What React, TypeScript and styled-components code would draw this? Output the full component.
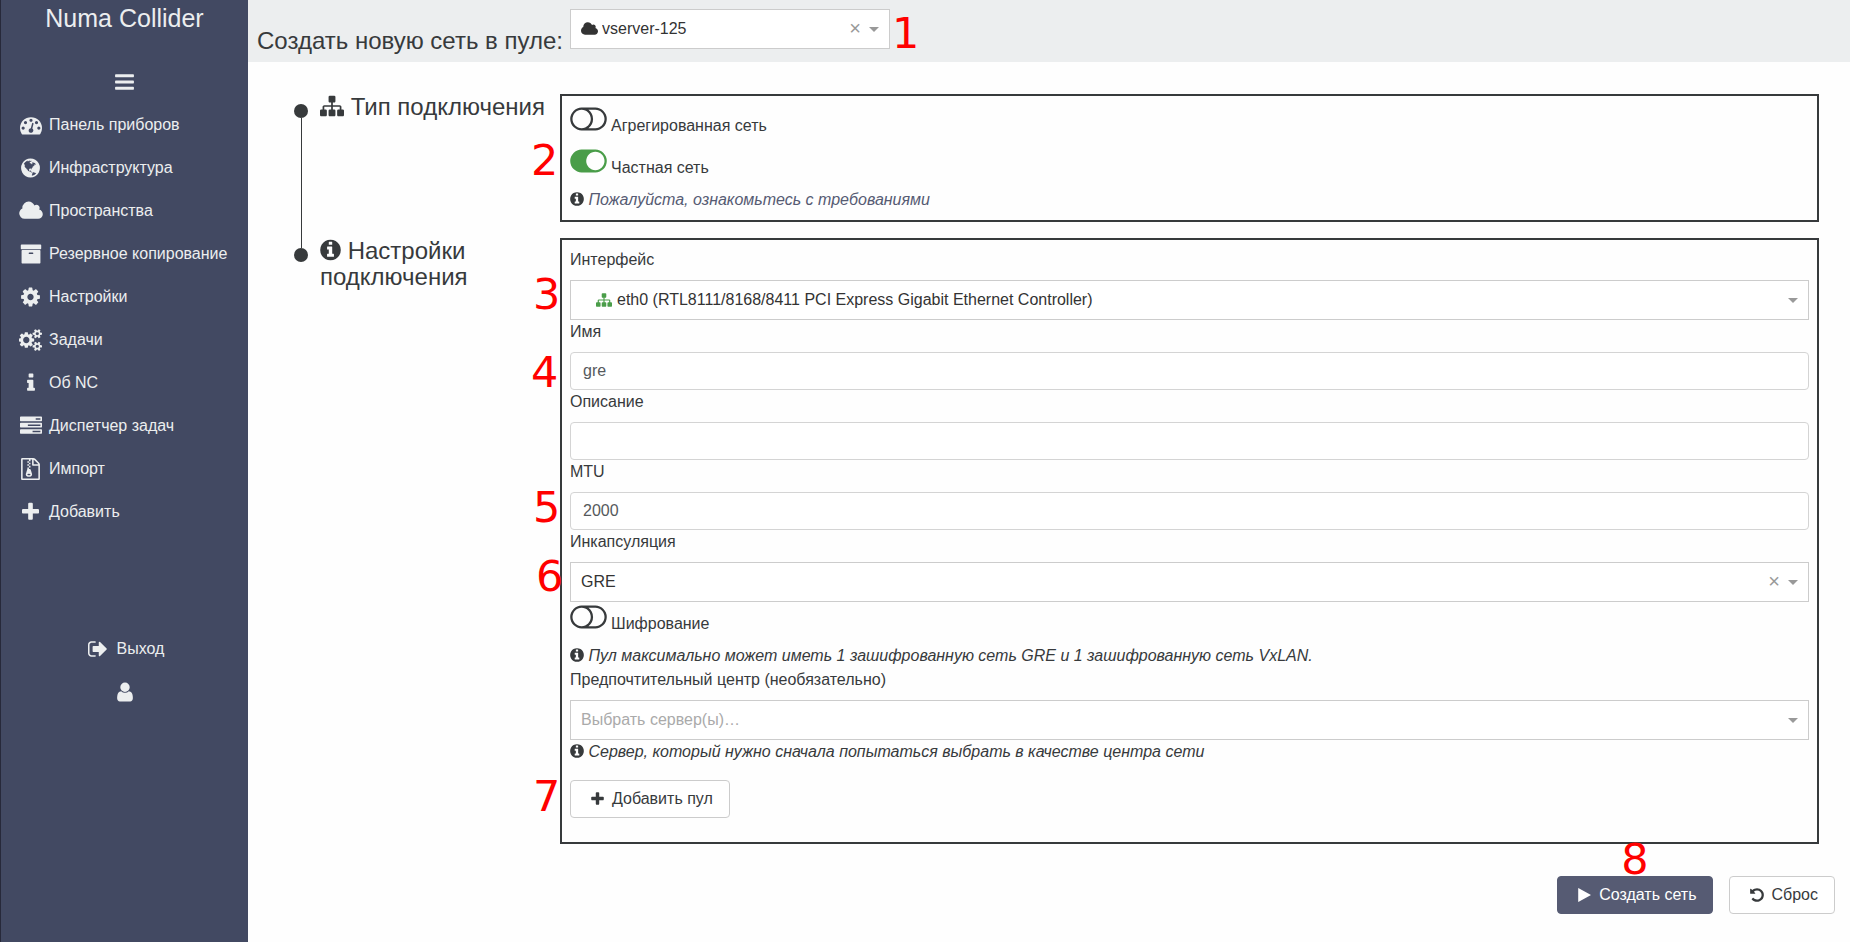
import React, { useState } from 'react';
import styled, { createGlobalStyle } from 'styled-components';

const color = {
  sidebar: '#424962',
  sidebarEdge: '#27293a',
  light: '#eceeef',
  ink: '#373a3c',
  input: '#55595c',
  border: '#cccccc',
  inputBorder: '#d4d4d4',
  muted: '#999999',
  green: '#4a9d49',
  primary: '#565b73',
  callout: '#ff0000',
};

const GlobalStyle = createGlobalStyle`
  *, *::before, *::after { box-sizing: border-box; }
  body {
    margin: 0;
    background: #fefefe;
    color: ${color.ink};
    font-family: "Liberation Sans", Arial, sans-serif;
    font-size: 16px;
    line-height: 24px;
  }
`;

/* ---------- icons: [left edge, width, path], all 1792 units high ---------- */

type Glyph = [number, number, string];

const glyphs = {
  bars: [128, 1536, 'M1664 1344v128q0 26-19 45t-45 19h-1408q-26 0-45-19t-19-45v-128q0-26 19-45t45-19h1408q26 0 45 19t19 45zm0-512v128q0 26-19 45t-45 19h-1408q-26 0-45-19t-19-45v-128q0-26 19-45t45-19h1408q26 0 45 19t19 45zm0-512v128q0 26-19 45t-45 19h-1408q-26 0-45-19t-19-45v-128q0-26 19-45t45-19h1408q26 0 45 19t19 45z'],
  dashboard: [0, 1792, 'M384 1152q0-53-37.5-90.5t-90.5-37.5-90.5 37.5-37.5 90.5 37.5 90.5 90.5 37.5 90.5-37.5 37.5-90.5zm192-448q0-53-37.5-90.5t-90.5-37.5-90.5 37.5-37.5 90.5 37.5 90.5 90.5 37.5 90.5-37.5 37.5-90.5zm428 481l101-382q6-26-7.5-48.5t-38.5-29.5-48 6.5-30 39.5l-101 382q-60 5-107 43.5t-63 98.5q-20 77 20 146t117 89 146-20 89-117q16-60-6-117t-72-91zm660-33q0-53-37.5-90.5t-90.5-37.5-90.5 37.5-37.5 90.5 37.5 90.5 90.5 37.5 90.5-37.5 37.5-90.5zm-640-640q0-53-37.5-90.5t-90.5-37.5-90.5 37.5-37.5 90.5 37.5 90.5 90.5 37.5 90.5-37.5 37.5-90.5zm448 192q0-53-37.5-90.5t-90.5-37.5-90.5 37.5-37.5 90.5 37.5 90.5 90.5 37.5 90.5-37.5 37.5-90.5zm320 448q0 261-141 483-19 29-54 29h-1402q-35 0-54-29-141-221-141-483 0-182 71-348t191-286 286-191 348-71 348 71 286 191 191 286 71 348z'],
  globe: [128, 1536, 'M896 128q209 0 385.5 103t279.5 279.5 103 385.5-103 385.5-279.5 279.5-385.5 103-385.5-103-279.5-279.5-103-385.5 103-385.5 279.5-279.5 385.5-103zm274 521q-2 1-9.5 9.5t-13.5 9.5q2 0 4.5-5t5-11 3.5-7q6-7 22-15 14-6 52-12 34-8 51 11-2-2 9.5-13t14.5-12q3-2 15-4.5t15-7.5l2-22q-12 1-17.5-7t-6.5-21q0 2-6 8 0-7-4.5-8t-11.5 1-9 1q-10-3-15-7.5t-8-16.5-4-15q-2-5-9.5-11t-9.5-10q-1-2-2.5-5.5t-3-6.5-4-5.5-5.5-2.5-7 5-7.5 10-4.5 5q-3-2-6-1.5t-4.5 1-4.5 3-5 3.5q-3 2-8.5 3t-8.5 2q15-5-1-11-10-4-16-3 9-4 7.5-12t-8.5-14h5q-1-4-8.5-8.5t-17.5-8.5-13-6q-8-5-34-9.5t-33-.5q-5 6-4.5 10.5t4 14 3.5 12.5q1 6-5.5 13t-6.5 12q0 7 14 15.5t10 21.5q-3 8-16 16t-16 12q-5 8-1.5 18.5t10.5 16.5q2 2 1.5 4t-3.5 4.5-5.5 4-6.5 3.5l-3 2q-11 5-20.5-6t-13.5-26q-7-25-16-30-23-8-29 1-5-13-41-26-25-9-58-4 6-1 0-15-7-15-19-12 3-6 4-17.5t1-13.5q3-13 12-23 1-1 7-8.5t9.5-13.5.5-6q35 4 50-11 5-5 11.5-17t10.5-17q9-6 14-5.5t14.5 5.5 14.5 5q14 1 15.5-11t-7.5-20q12 1 3-17-4-7-8-9-12-4-27 5-8 4 2 8-1-1-9.5 10.5t-16.5 17.5-16-5q-1-1-5.5-13.5t-9.5-13.5q-8 0-16 15 3-8-11-15t-24-8q19-12-8-27-7-4-20.5-5t-19.5 4q-5 7-5.5 11.5t5 8 10.5 5.5 11.5 4 8.5 3q14 10 8 14-2 1-8.5 3.5t-11.5 4.5-6 4q-3 4 0 14t-2 14q-5-5-9-17.5t-7-16.5q7 9-25 6l-10-1q-4 0-16 2t-20.5 1-13.5-8q-4-8 0-20 1-4 4-2-4-3-11-9.5t-10-8.5q-46 15-94 41 6 1 12-1 5-2 13-6.5t10-5.5q34-14 42-7l5-5q14 16 20 25-7-4-30-1-20 6-22 12 7 12 5 18-4-3-11.5-10t-14.5-11-15-5q-16 0-22 1-146 80-235 222 7 7 12 8 4 1 5 9t2.5 11 11.5-3q9 8 3 19 1-1 44 27 19 17 21 21 3 11-10 18-1-2-9-9t-9-4q-3 5 .5 18.5t10.5 12.5q-7 0-9.5 16t-2.5 35.5-1 23.5l2 1q-3 12 5.5 34.5t21.5 19.5q-13 3 20 43 6 8 8 9 3 2 12 7.5t15 10 10 10.5q4 5 10 22.5t14 23.5q-2 6 9.5 20t10.5 23q-1 0-2.5 1t-2.5 1q3 7 15.5 14t15.5 13q1 3 2 10t3 11 8 2q2-20-24-62-15-25-17-29-3-5-5.5-15.5t-4.5-14.5q2 0 6 1.5t8.5 3.5 7.5 4 2 3q-3 7 2 17.5t12 18.5 17 19 12 13q6 6 14 19.5t0 13.5q9 0 20 10t17 20q5 8 8 26t5 24q2 7 8.5 13.5t12.5 9.5l16 8 13 7q5 2 18.5 10.5t21.5 11.5q10 4 16 4t14.5-2.5 13.5-3.5q15-2 29 15t21 21q36 19 55 11-2 1 .5 7.5t8 15.5 9 14.5 5.5 8.5q5 6 18 15t18 15q6-4 7-9-3 8 7 20t18 10q14-3 14-32-31 15-49-18 0-1-2.5-5.5t-4-8.5-2.5-8.5 0-7.5 5-3q9 0 10-3.5t-2-12.5-4-13q-1-8-11-20t-12-15q-5 9-16 8t-16-9q0 1-1.5 5.5t-1.5 6.5q-13 0-15-1 1-3 2.5-17.5t3.5-22.5q1-4 5.5-12t7.5-14.5 4-12.5-4.5-9.5-17.5-2.5q-19 1-26 20-1 3-3 10.5t-5 11.5-9 7q-7 3-24 2t-24-5q-13-8-22.5-29t-9.5-37q0-10 2.5-26.5t3-25-5.5-24.5q3-2 9-9.5t10-10.5q2-1 4.5-1.5t4.5 0 4-1.5 3-6q-1-1-4-3-3-3-4-3 7 3 28.5-1.5t27.5 1.5q15 11 22-2 0-1-2.5-9.5t-.5-13.5q5 27 29 9 3 3 15.5 5t17.5 5q3 2 7 5.5t5.5 4.5 5-.5 8.5-6.5q10 14 12 24 11 40 19 44 7 3 11 2t4.5-9.5 0-14-1.5-12.5l-1-8v-18l-1-8q-15-3-18.5-12t1.5-18.5 15-18.5q1-1 8-3.5t15.5-6.5 12.5-8q21-19 15-35 7 0 11-9-1 0-5-3t-7.5-5-4.5-2q9-5 2-16 5-3 7.5-11t7.5-10q9 12 21 2 8-8 1-16 5-7 20.5-10.5t18.5-9.5q7 2 8-2t1-12 3-12q4-5 15-9t13-5l17-11q3-4 0-4 18 2 31-11 10-11-6-20 3-6-3-9.5t-15-5.5q3-1 11.5-.5t10.5-1.5q15-10-7-16-17-5-43 12zm-163 877q206-36 351-189-3-3-12.5-4.5t-12.5-3.5q-18-7-24-8 1-7-2.5-13t-8-9-12.5-8-11-7q-2-2-7-6t-7-5.5-7.5-4.5-8.5-2-10 1l-3 1q-3 1-5.5 2.5t-5.5 3-4 3 0 2.5q-21-17-36-22-5-1-11-5.5t-10.5-7-10-1.5-11.5 7q-5 5-6 15t-2 13q-7-5 0-17.5t2-18.5q-3-6-10.5-4.5t-12 4.5-11.5 8.5-9 6.5-8.5 5.5-8.5 7.5q-3 4-6 12t-5 11q-2-4-11.5-6.5t-9.5-5.5q2 10 4 35t5 38q7 31-12 48-27 25-29 40-4 22 12 26 0 7-8 20.5t-7 21.5q0 6 2 16z'],
  cloud: [64, 1920, 'M1984 1152q0 159-112.5 271.5t-271.5 112.5h-1088q-185 0-316.5-131.5t-131.5-316.5q0-132 71-241.5t187-163.5q-2-28-2-43 0-212 150-362t362-150q158 0 286.5 88t187.5 230q70-62 166-62 106 0 181 75t75 181q0 75-41 138 129 30 213 134.5t84 239.5z'],
  archive: [0, 1792, 'M1088 832q0-26-19-45t-45-19h-256q-26 0-45 19t-19 45 19 45 45 19h256q26 0 45-19t19-45zm576-192v960q0 26-19 45t-45 19h-1408q-26 0-45-19t-19-45v-960q0-26 19-45t45-19h1408q26 0 45 19t19 45zm64-448v256q0 26-19 45t-45 19h-1536q-26 0-45-19t-19-45v-256q0-26 19-45t45-19h1536q26 0 45 19t19 45z'],
  cog: [128, 1536, 'M1152 896q0-106-75-181t-181-75-181 75-75 181 75 181 181 75 181-75 75-181zm512-109v222q0 12-8 23t-20 13l-185 28q-19 54-39 91 35 50 107 138 10 12 10 25t-9 23q-27 37-99 108t-94 71q-12 0-26-9l-138-108q-44 23-91 38-16 136-29 186-7 28-36 28h-222q-14 0-24.5-8.5t-11.5-21.5l-28-184q-49-16-90-37l-141 107q-10 9-25 9-14 0-25-11-126-114-165-168-7-10-7-23 0-12 8-23 15-21 51-66.5t54-70.5q-27-50-41-99l-183-27q-13-2-21-12.5t-8-23.5v-222q0-12 8-23t19-13l186-28q14-46 39-92-40-57-107-138-10-12-10-24 0-10 9-23 26-36 98.5-107.5t94.5-71.5q13 0 26 10l138 107q44-23 91-38 16-136 29-186 7-28 36-28h222q14 0 24.5 8.5t11.5 21.5l28 184q49 16 90 37l142-107q9-9 24-9 13 0 25 10 129 119 165 170 7 8 7 22 0 12-8 23-15 21-51 66.5t-54 70.5q26 50 41 98l183 28q13 2 21 12.5t8 23.5z'],
  cogs: [0, 1920, 'M832 896q0-106-75-181t-181-75-181 75-75 181 75 181 181 75 181-75 75-181zm768 512q0-52-38-90t-90-38-90 38-38 90q0 53 37.5 90.5t90.5 37.5 90.5-37.5 37.5-90.5zm0-1024q0-52-38-90t-90-38-90 38-38 90q0 53 37.5 90.5t90.5 37.5 90.5-37.5 37.5-90.5zm-384 421v185q0 10-7 19.5t-16 10.5l-155 24q-11 35-32 76 34 48 90 115 7 11 7 20 0 12-7 19-23 30-82.5 89.5t-78.5 59.5q-11 0-21-7l-115-90q-37 19-77 31-11 108-23 155-7 24-30 24h-186q-11 0-20-7.5t-10-17.5l-23-153q-34-10-75-31l-118 89q-7 7-20 7-11 0-21-8-144-133-144-160 0-9 7-19 10-14 41-53t47-61q-23-44-35-82l-152-24q-10-1-17-9.5t-7-19.5v-185q0-10 7-19.5t16-10.5l155-24q11-35 32-76-34-48-90-115-7-11-7-20 0-12 7-20 22-30 82-89t79-59q11 0 21 7l115 90q34-18 77-32 11-108 23-154 7-24 30-24h186q11 0 20 7.5t10 17.5l23 153q34 10 75 31l118-89q8-7 20-7 11 0 21 8 144 133 144 160 0 8-7 19-12 16-42 54t-45 60q23 48 34 82l152 23q10 2 17 10.5t7 19.5zm640 533v140q0 16-149 31-12 27-30 52 51 113 51 138 0 4-4 7-122 71-124 71-8 0-46-47t-52-68q-20 2-30 2t-30-2q-14 21-52 68t-46 47q-2 0-124-71-4-3-4-7 0-25 51-138-18-25-30-52-149-15-149-31v-140q0-16 149-31 13-29 30-52-51-113-51-138 0-4 4-7 4-2 35-20t59-34 30-16q8 0 46 46.5t52 67.5q20-2 30-2t30 2q51-71 92-112l6-2q4 0 124 70 4 3 4 7 0 25-51 138 17 23 30 52 149 15 149 31zm0-1024v140q0 16-149 31-12 27-30 52 51 113 51 138 0 4-4 7-122 71-124 71-8 0-46-47t-52-68q-20 2-30 2t-30-2q-14 21-52 68t-46 47q-2 0-124-71-4-3-4-7 0-25 51-138-18-25-30-52-149-15-149-31v-140q0-16 149-31 13-29 30-52-51-113-51-138 0-4 4-7 4-2 35-20t59-34 30-16q8 0 46 46.5t52 67.5q20-2 30-2t30 2q51-71 92-112l6-2q4 0 124 70 4 3 4 7 0 25-51 138 17 23 30 52 149 15 149 31z'],
  info: [576, 640, 'M1216 1344v128q0 26-19 45t-45 19h-512q-26 0-45-19t-19-45v-128q0-26 19-45t45-19h64v-384h-64q-26 0-45-19t-19-45v-128q0-26 19-45t45-19h384q26 0 45 19t19 45v576h64q26 0 45 19t19 45zm-128-1152v192q0 26-19 45t-45 19h-256q-26 0-45-19t-19-45v-192q0-26 19-45t45-19h256q26 0 45 19t19 45z'],
  tasks: [0, 1792, 'M1024 1408h640v-128h-640v128zm-384-512h1024v-128h-1024v128zm640-512h384v-128h-384v128zm512 832v256q0 26-19 45t-45 19h-1664q-26 0-45-19t-19-45v-256q0-26 19-45t45-19h1664q26 0 45 19t19 45zm0-512v256q0 26-19 45t-45 19h-1664q-26 0-45-19t-19-45v-256q0-26 19-45t45-19h1664q26 0 45 19t19 45zm0-512v256q0 26-19 45t-45 19h-1664q-26 0-45-19t-19-45v-256q0-26 19-45t45-19h1664q26 0 45 19t19 45z'],
  archiveFile: [128, 1536, 'M768 384v-128h-128v128h128zm128 128v-128h-128v128h128zm-128 128v-128h-128v128h128zm128 128v-128h-128v128h128zm700-388q28 28 48 76t20 88v1152q0 40-28 68t-68 28h-1344q-40 0-68-28t-28-68v-1600q0-40 28-68t68-28h896q40 0 88 20t76 48zm-444-244v376h376q-10-29-22-41l-313-313q-12-12-41-22zm384 1528v-1024h-416q-40 0-68-28t-28-68v-416h-128v128h-128v-128h-512v1536h1280zm-627-721l107 349q8 27 8 52 0 83-72.5 137.5t-183.5 54.5-183.5-54.5-72.5-137.5q0-25 8-52 21-63 120-396v-128h128v128h79q22 0 39 13t23 34zm-141 465q53 0 90.5-19t37.5-45-37.5-45-90.5-19-90.5 19-37.5 45 37.5 45 90.5 19z'],
  plus: [192, 1408, 'M1600 736v192q0 40-28 68t-68 28h-416v416q0 40-28 68t-68 28h-192q-40 0-68-28t-28-68v-416h-416q-40 0-68-28t-28-68v-192q0-40 28-68t68-28h416v-416q0-40 28-68t68-28h192q40 0 68 28t28 68v416h416q40 0 68 28t28 68z'],
  signOut: [64, 1664, 'M704 1440q0 4 1 20t.5 26.5-3 23.5-10 19.5-20.5 6.5h-320q-119 0-203.5-84.5t-84.5-203.5v-704q0-119 84.5-203.5t203.5-84.5h320q13 0 22.5 9.5t9.5 22.5q0 4 1 20t.5 26.5-3 23.5-10 19.5-20.5 6.5h-320q-66 0-113 47t-47 113v704q0 66 47 113t113 47h312l11.5 1 11.5 3 8 5.5 7 9 2 13.5zm928-544q0 26-19 45l-544 544q-19 19-45 19t-45-19-19-45v-288h-448q-26 0-45-19t-19-45v-384q0-26 19-45t45-19h448v-288q0-26 19-45t45-19 45 19l544 544q19 19 19 45z'],
  user: [256, 1280, 'M1536 1399q0 109-62.5 187t-150.5 78h-854q-88 0-150.5-78t-62.5-187q0-85 8.5-160.5t31.5-152 58.5-131 94-89 134.5-34.5q131 128 313 128t313-128q76 0 134.5 34.5t94 89 58.5 131 31.5 152 8.5 160.5zm-256-887q0 159-112.5 271.5t-271.5 112.5-271.5-112.5-112.5-271.5 112.5-271.5 271.5-112.5 271.5 112.5 112.5 271.5z'],
  infoCircle: [128, 1536, 'M1152 1376v-160q0-14-9-23t-23-9h-96v-512q0-14-9-23t-23-9h-320q-14 0-23 9t-9 23v160q0 14 9 23t23 9h96v320h-96q-14 0-23 9t-9 23v160q0 14 9 23t23 9h448q14 0 23-9t9-23zm-128-896v-160q0-14-9-23t-23-9h-192q-14 0-23 9t-9 23v160q0 14 9 23t23 9h192q14 0 23-9t9-23zm640 416q0 209-103 385.5t-279.5 279.5-385.5 103-385.5-103-279.5-279.5-103-385.5 103-385.5 279.5-279.5 385.5-103 385.5 103 279.5 279.5 103 385.5z'],
  sitemap: [0, 1792, 'M1792 1248v320q0 40-28 68t-68 28h-320q-40 0-68-28t-28-68v-320q0-40 28-68t68-28h96v-192h-512v192h96q40 0 68 28t28 68v320q0 40-28 68t-68 28h-320q-40 0-68-28t-28-68v-320q0-40 28-68t68-28h96v-192h-512v192h96q40 0 68 28t28 68v320q0 40-28 68t-68 28h-320q-40 0-68-28t-28-68v-320q0-40 28-68t68-28h96v-192q0-52 38-90t90-38h512v-192h-96q-40 0-68-28t-28-68v-320q0-40 28-68t68-28h320q40 0 68 28t28 68v320q0 40-28 68t-68 28h-96v192h512q52 0 90 38t38 90v192h96q40 0 68 28t28 68z'],
  play: [192, 1408, 'M1576 927l-1328 738q-23 13-39.5 3t-16.5-36v-1472q0-26 16.5-36t39.5 3l1328 738q23 13 23 31t-23 31z'],
  undo: [128, 1536, 'M1664 896q0 156-61 298t-164 245-245 164-298 61q-172 0-327-72.5t-264-204.5q-7-10-6.5-22.5t8.5-20.5l137-138q10-9 25-9 16 2 23 12 73 95 179 147t225 52q104 0 198.5-40.5t163.5-109.5 109.5-163.5 40.5-198.5-40.5-198.5-109.5-163.5-163.5-109.5-198.5-40.5q-98 0-188 35.5t-160 101.5l137 138q31 30 14 69-17 40-59 40h-448q-26 0-45-19t-19-45v-448q0-42 40-59 39-17 69 14l130 129q107-101 244.5-156.5t284.5-55.5q156 0 298 61t245 164 164 245 61 298z'],
  toggleOff: [0, 2048, 'M1152 896q0-104-40.5-198.5t-109.5-163.5-163.5-109.5-198.5-40.5-198.5 40.5-163.5 109.5-109.5 163.5-40.5 198.5 40.5 198.5 109.5 163.5 163.5 109.5 198.5 40.5 198.5-40.5 163.5-109.5 109.5-163.5 40.5-198.5zm768 0q0-104-40.5-198.5t-109.5-163.5-163.5-109.5-198.5-40.5h-386q119 90 188.5 224t69.5 288-69.5 288-188.5 224h386q104 0 198.5-40.5t163.5-109.5 109.5-163.5 40.5-198.5zm128 0q0 130-51 248.5t-136.5 204-204 136.5-248.5 51h-768q-130 0-248.5-51t-204-136.5-136.5-204-51-248.5 51-248.5 136.5-204 204-136.5 248.5-51h768q130 0 248.5 51t204 136.5 136.5 204 51 248.5z'],
  toggleOn: [0, 2048, 'M0 896q0-130 51-248.5t136.5-204 204-136.5 248.5-51h768q130 0 248.5 51t204 136.5 136.5 204 51 248.5-51 248.5-136.5 204-204 136.5-248.5 51h-768q-130 0-248.5-51t-204-136.5-136.5-204-51-248.5zm1408 512q104 0 198.5-40.5t163.5-109.5 109.5-163.5 40.5-198.5-40.5-198.5-109.5-163.5-163.5-109.5-198.5-40.5-198.5 40.5-163.5 109.5-109.5 163.5-40.5 198.5 40.5 198.5 109.5 163.5 163.5 109.5 198.5 40.5z'],
} satisfies Record<string, Glyph>;

type IconName = keyof typeof glyphs;

const Svg = styled.svg`
  flex: none;
  fill: currentColor;
  vertical-align: -2px;
`;

function Icon({ name, size = 16 }: { name: IconName; size?: number }) {
  const [left, width, path] = glyphs[name];
  return (
    <Svg
      width={Math.round((size * width) / 1792)}
      height={size}
      viewBox={`${left} 0 ${width} 1792`}
      aria-hidden="true"
    >
      <path d={path} />
    </Svg>
  );
}

/* ---------- frame ---------- */

const Page = styled.div`
  display: flex;
  min-height: 100vh;
`;

const Sidebar = styled.aside`
  flex: none;
  width: 248px;
  border-left: 1px solid ${color.sidebarEdge};
  background: ${color.sidebar};
  color: ${color.light};
`;

const Brand = styled.div`
  margin-bottom: 24px;
  font-size: 25px;
  line-height: 36px;
  text-align: center;
`;

const NavList = styled.ul`
  margin: 0 0 94px;
  padding: 0;
  list-style: none;
`;

const NavLink = styled.a<{ $centered?: boolean }>`
  display: flex;
  align-items: center;
  justify-content: ${(p) => (p.$centered ? 'center' : 'flex-start')};
  gap: 5px;
  height: 43px;
  padding: 0 16px;
  color: inherit;
  text-decoration: none;
  white-space: nowrap;
`;

const IconSlot = styled.span<{ $width: number }>`
  display: flex;
  justify-content: center;
  width: ${(p) => p.$width}px;
`;

const MenuButton = styled.button`
  display: flex;
  align-items: center;
  justify-content: center;
  width: 100%;
  height: 43px;
  padding: 0;
  border: 0;
  background: none;
  color: inherit;
`;

const Content = styled.main`
  flex: 1;
  min-width: 0;
`;

const Header = styled.header`
  display: flex;
  align-items: flex-start;
  gap: 7px;
  min-height: 62px;
  padding: 9px 9px 8px;
  background: ${color.light};
`;

const PageTitle = styled.h1`
  align-self: flex-end;
  margin: 0;
  font-size: 24px;
  font-weight: 400;
  line-height: 26px;
`;

const PoolPicker = styled.div`
  width: 320px;
`;

/* ---------- steps ---------- */

const Steps = styled.div`
  padding: 32px 31px 0 46px;
`;

const StepRow = styled.section`
  display: flex;
`;

const Track = styled.div`
  display: flex;
  flex: none;
  flex-direction: column;
  align-items: center;
  width: 14px;
  margin-right: 12px;
`;

const TrackLine = styled.span<{ $lead?: boolean; $visible: boolean }>`
  flex: ${(p) => (p.$lead ? '0 0 10px' : '1')};
  width: 1px;
  background: ${(p) => (p.$visible ? color.ink : 'transparent')};
`;

const TrackDot = styled.span`
  width: 14px;
  height: 14px;
  border-radius: 50%;
  background: ${color.ink};
`;

const StepTitle = styled.h2`
  flex: none;
  width: 240px;
  margin: 0;
  padding-right: 8px;
  font-size: 24px;
  font-weight: 400;
  line-height: 26px;

  svg {
    vertical-align: -3px;
  }
`;

const Panel = styled.div`
  flex: 1;
  min-width: 0;
  margin-bottom: 16px;
  padding: 8px;
  border: 2px solid ${color.ink};
`;

interface StepProps {
  icon: IconName;
  title: string;
  first?: boolean;
  last?: boolean;
  children: React.ReactNode;
}

function Step({ icon, title, first = false, last = false, children }: StepProps) {
  return (
    <StepRow>
      <Track>
        <TrackLine $lead $visible={!first} />
        <TrackDot />
        <TrackLine $visible={!last} />
      </Track>
      <StepTitle>
        <Icon name={icon} size={24} /> {title}
      </StepTitle>
      <Panel>{children}</Panel>
    </StepRow>
  );
}

/* ---------- controls ---------- */

const Anchor = styled.div`
  position: relative;
`;

const Callout = styled.span<{ $left: number; $top: number }>`
  position: absolute;
  left: ${(p) => p.$left}px;
  top: ${(p) => p.$top}px;
  z-index: 1;
  color: ${color.callout};
  font-family: "DejaVu Sans", sans-serif;
  font-size: 43px;
  line-height: 44px;
  pointer-events: none;
`;

const FieldLabel = styled.label`
  display: block;
  margin-bottom: 8px;
`;

const TextInput = styled.input`
  display: block;
  width: 100%;
  height: 38px;
  padding: 0 12px;
  border: 1px solid ${color.inputBorder};
  border-radius: 4px;
  background: #ffffff;
  color: ${color.input};
  font: inherit;
`;

const SelectBox = styled.select<{ $indent: number; $empty: boolean }>`
  display: block;
  width: 100%;
  height: 40px;
  padding: 0 60px 0 ${(p) => p.$indent}px;
  border: 1px solid ${color.border};
  border-radius: 0;
  background: #ffffff;
  color: ${(p) => (p.$empty ? '#aaaaaa' : '#333333')};
  font: inherit;
  appearance: none;
`;

const SelectIcon = styled.span<{ $left: number; $green?: boolean }>`
  position: absolute;
  top: 0;
  left: ${(p) => p.$left}px;
  display: flex;
  align-items: center;
  height: 40px;
  color: ${(p) => (p.$green ? color.green : '#333333')};
  pointer-events: none;
`;

const SelectTools = styled.span`
  position: absolute;
  top: 0;
  right: 11px;
  display: flex;
  align-items: center;
  gap: 8px;
  height: 40px;
  color: ${color.muted};
  pointer-events: none;
`;

const ClearButton = styled.button`
  padding: 0 0 2px;
  border: 0;
  background: none;
  color: inherit;
  font: inherit;
  font-size: 20px;
  line-height: 20px;
  pointer-events: auto;
`;

const Caret = styled.span`
  border-top: 5px solid currentColor;
  border-left: 5px solid transparent;
  border-right: 5px solid transparent;
`;

interface SelectProps {
  id: string;
  value: string;
  label?: string;
  icon?: IconName;
  nested?: boolean;
  placeholder?: boolean;
  clearable?: boolean;
  children?: React.ReactNode;
}

function Select({ id, value, label, icon, nested, placeholder = false, clearable, children }: SelectProps) {
  const iconLeft = nested ? 26 : 11;
  const indent = icon ? iconLeft + 20 : 10;
  return (
    <Anchor>
      <SelectBox id={id} aria-label={label} $indent={indent} $empty={placeholder}>
        <option>{value}</option>
      </SelectBox>
      {icon && (
        <SelectIcon $left={iconLeft} $green={nested}>
          <Icon name={icon} />
        </SelectIcon>
      )}
      <SelectTools>
        {clearable && (
          <ClearButton type="button" aria-label="Очистить">
            ×
          </ClearButton>
        )}
        <Caret />
      </SelectTools>
      {children}
    </Anchor>
  );
}

const ToggleLabel = styled.label<{ $on: boolean }>`
  position: relative;
  display: flex;
  align-items: flex-start;
  gap: 4px;
  height: 42px;
  line-height: 44px;

  svg {
    margin-top: -1px;
    color: ${(p) => (p.$on ? color.green : color.ink)};
  }
`;

const HiddenCheckbox = styled.input`
  position: absolute;
  width: 36px;
  height: 32px;
  margin: 0;
  opacity: 0;
`;

interface ToggleProps {
  text: string;
  initial?: boolean;
  children?: React.ReactNode;
}

function Toggle({ text, initial = false, children }: ToggleProps) {
  const [on, setOn] = useState(initial);
  return (
    <ToggleLabel $on={on}>
      <HiddenCheckbox type="checkbox" checked={on} onChange={() => setOn(!on)} />
      <Icon name={on ? 'toggleOn' : 'toggleOff'} size={32} />
      {text}
      {children}
    </ToggleLabel>
  );
}

const Hint = styled.p`
  margin: 0;

  a {
    color: ${color.primary};
    text-decoration: none;
  }
`;

const Button = styled.button<{ $primary?: boolean }>`
  display: inline-flex;
  align-items: center;
  gap: 4px;
  height: 38px;
  padding: 0 16px;
  border: 1px solid ${(p) => (p.$primary ? color.primary : color.border)};
  border-radius: 4px;
  background: ${(p) => (p.$primary ? color.primary : '#ffffff')};
  color: ${(p) => (p.$primary ? '#ffffff' : color.ink)};
  font: inherit;
  white-space: nowrap;
`;

const AddPool = styled.div`
  position: relative;
  display: flex;
  margin: 16px 0;
`;

const Actions = styled.div`
  display: flex;
  justify-content: flex-end;
  gap: 16px;
  padding: 16px 15px 20px;
`;

/* ---------- page ---------- */

const menu: { icon: IconName; text: string }[] = [
  { icon: 'dashboard', text: 'Панель приборов' },
  { icon: 'globe', text: 'Инфраструктура' },
  { icon: 'cloud', text: 'Пространства' },
  { icon: 'archive', text: 'Резервное копирование' },
  { icon: 'cog', text: 'Настройки' },
  { icon: 'cogs', text: 'Задачи' },
  { icon: 'info', text: 'Об NC' },
  { icon: 'tasks', text: 'Диспетчер задач' },
  { icon: 'archiveFile', text: 'Импорт' },
  { icon: 'plus', text: 'Добавить' },
];

function Navigation() {
  return (
    <Sidebar>
      <Brand>Numa Collider</Brand>
      <MenuButton type="button" aria-label="Меню">
        <Icon name="bars" size={22} />
      </MenuButton>
      <nav>
        <NavList>
          {menu.map((item) => (
            <li key={item.text}>
              <NavLink href="#">
                <IconSlot $width={27}>
                  <Icon name={item.icon} size={22} />
                </IconSlot>
                {item.text}
              </NavLink>
            </li>
          ))}
        </NavList>
        <NavLink href="#" $centered>
          <IconSlot $width={27}>
            <Icon name="signOut" size={22} />
          </IconSlot>
          Выход
        </NavLink>
        <NavLink href="#" $centered aria-label="Пользователь">
          <Icon name="user" size={22} />
        </NavLink>
      </nav>
    </Sidebar>
  );
}

export default function App() {
  return (
    <>
      <GlobalStyle />
      <Page>
        <Navigation />
        <Content>
          <Header>
            <PageTitle>Создать новую сеть в пуле:</PageTitle>
            <PoolPicker>
              <Select id="pool" label="Пул" value="vserver-125" icon="cloud" clearable>
                <Callout $left={322} $top={2}>1</Callout>
              </Select>
            </PoolPicker>
          </Header>
          <form onSubmit={(e) => e.preventDefault()}>
            <Steps>
              <Step icon="sitemap" title="Тип подключения" first>
                <Toggle text="Агрегированная сеть" />
                <Toggle text="Частная сеть" initial>
                  <Callout $left={-39} $top={-8}>2</Callout>
                </Toggle>
                <Hint>
                  <Icon name="infoCircle" />{' '}
                  <em>
                    <a href="#">Пожалуйста, ознакомьтесь с требованиями</a>
                  </em>
                </Hint>
              </Step>
              <Step icon="infoCircle" title="Настройки подключения" last>
                <FieldLabel htmlFor="pif">Интерфейс</FieldLabel>
                <Select
                  id="pif"
                  value="eth0 (RTL8111/8168/8411 PCI Express Gigabit Ethernet Controller)"
                  icon="sitemap"
                  nested
                >
                  <Callout $left={-37} $top={-8}>3</Callout>
                </Select>
                <FieldLabel htmlFor="name">Имя</FieldLabel>
                <Anchor>
                  <TextInput id="name" type="text" defaultValue="gre" />
                  <Callout $left={-39} $top={-2}>4</Callout>
                </Anchor>
                <FieldLabel htmlFor="description">Описание</FieldLabel>
                <TextInput id="description" type="text" />
                <FieldLabel htmlFor="mtu">MTU</FieldLabel>
                <Anchor>
                  <TextInput id="mtu" type="text" defaultValue="2000" />
                  <Callout $left={-37} $top={-7}>5</Callout>
                </Anchor>
                <FieldLabel htmlFor="encapsulation">Инкапсуляция</FieldLabel>
                <Select id="encapsulation" value="GRE" clearable>
                  <Callout $left={-34} $top={-8}>6</Callout>
                </Select>
                <Toggle text="Шифрование" />
                <Hint>
                  <Icon name="infoCircle" />{' '}
                  <em>Пул максимально может иметь 1 зашифрованную сеть GRE и 1 зашифрованную сеть VxLAN.</em>
                </Hint>
                <FieldLabel htmlFor="center">Предпочтительный центр (необязательно)</FieldLabel>
                <Select id="center" value="Выбрать сервер(ы)…" placeholder />
                <Hint>
                  <Icon name="infoCircle" />{' '}
                  <em>Сервер, который нужно сначала попытаться выбрать в качестве центра сети</em>
                </Hint>
                <AddPool>
                  <Button type="button">
                    <IconSlot $width={21}>
                      <Icon name="plus" />
                    </IconSlot>
                    Добавить пул
                  </Button>
                  <Callout $left={-37} $top={-6}>7</Callout>
                </AddPool>
              </Step>
            </Steps>
            <Actions>
              <Anchor>
                <Button type="submit" $primary>
                  <IconSlot $width={21}>
                    <Icon name="play" />
                  </IconSlot>
                  Создать сеть
                </Button>
                <Callout $left={64} $top={-39}>8</Callout>
              </Anchor>
              <Button type="reset">
                <IconSlot $width={21}>
                  <Icon name="undo" />
                </IconSlot>
                Сброс
              </Button>
            </Actions>
          </form>
        </Content>
      </Page>
    </>
  );
}
